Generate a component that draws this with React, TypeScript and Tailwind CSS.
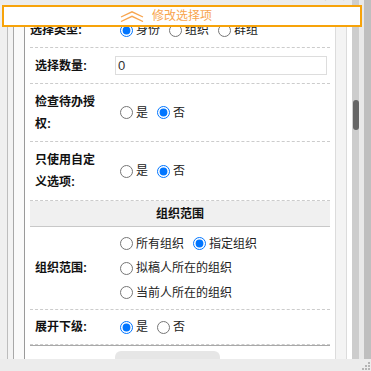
import type { ReactNode } from "react";

const FONT = { fontFamily: '"Liberation Sans", "Noto Sans CJK SC", sans-serif' };

function Radio({ label, checked }: { label: string; checked?: boolean }) {
  return (
    <label className="flex items-center mr-[4px]">
      <input
        type="radio"
        checked={!!checked}
        readOnly
        className="ml-[5px] mr-[3px] w-[13px] h-[13px]"
      />
      <span className="text-[#222]">{label}</span>
    </label>
  );
}

function Row({
  label,
  height,
  children,
  labelClass = "pl-[5px]",
}: {
  label: string;
  height: string;
  children: ReactNode;
  labelClass?: string;
}) {
  return (
    <div className={`flex items-center border-b border-dashed border-[#ccc] ${height}`}>
      <div className={`w-[85px] pr-[15px] font-bold leading-[22px] text-[#111] ${labelClass}`}>{label}</div>
      <div className="flex-1">{children}</div>
    </div>
  );
}

function Chevrons() {
  return (
    <svg width="24" height="11" viewBox="0 0 24 11" fill="none" stroke="#f8a54e" strokeWidth="1.3">
      <path d="M1 6 L12 0.8 L23 6" />
      <path d="M1 10.5 L12 5.3 L23 10.5" />
    </svg>
  );
}

export default function App() {
  return (
    <div className="relative w-[371px] h-[371px] overflow-hidden bg-[#efefef] text-[12px]" style={FONT}>
      <div className="flex h-[359px]">
        <div className="flex flex-col w-[352px]">
          {/* top strip, caption mostly scrolled out of view */}
          <div className="h-[5px] bg-[#ececec] overflow-hidden flex justify-end items-end pr-[1px]">
            <span className="font-bold text-[12px] leading-[12px] mb-[4px] text-[#222]">选择范围设置项</span>
          </div>

          <div className="flex flex-1 min-h-0">
            <div className="w-[7px] bg-[#efefef]" />
            <div className="w-[1px] bg-[#bdbdbd]" />
            <div className="w-[5px] bg-[#f3f3f3]" />
            <div className="w-[1px] bg-[#a8a8a8]" />
            <div className="w-[10px] bg-[#fafafa]" />
            <div className="w-[1px] bg-[#9a9a9a]" />

            <div className="w-[310px] bg-white overflow-hidden px-[5px] pt-[8px]">
              <Row label="选择类型:" height="h-[35px]" labelClass="pl-0 w-[80px]">
                <div className="flex items-center">
                  <Radio label="身份" checked />
                  <Radio label="组织" />
                  <Radio label="群组" />
                </div>
              </Row>
              <Row label="选择数量:" height="h-[36px]">
                <input
                  readOnly
                  value="0"
                  className="w-[212px] h-[19px] border border-[#ddd] px-[2px] text-[13px] text-[#333] outline-none"
                />
              </Row>
              <Row label="检查待办授权:" height="h-[58px]">
                <div className="flex items-center">
                  <Radio label="是" />
                  <Radio label="否" checked />
                </div>
              </Row>
              <Row label="只使用自定义选项:" height="h-[59px]">
                <div className="flex items-center">
                  <Radio label="是" />
                  <Radio label="否" checked />
                </div>
              </Row>

              <div className="h-[26px] bg-[#f0f0f0] border-b border-[#c8c8c8] flex items-center justify-center font-bold text-[#111]">
                组织范围
              </div>

              <Row label="组织范围:" height="h-[83px]">
                <div className="flex flex-col">
                  <div className="flex items-center h-[24.5px]">
                    <Radio label="所有组织" />
                    <Radio label="指定组织" checked />
                  </div>
                  <div className="flex items-center h-[24.5px]">
                    <Radio label="拟稿人所在的组织" />
                  </div>
                  <div className="flex items-center h-[24.5px]">
                    <Radio label="当前人所在的组织" />
                  </div>
                </div>
              </Row>
              <Row label="展开下级:" height="h-[35px]">
                <div className="flex items-center">
                  <Radio label="是" checked />
                  <Radio label="否" />
                </div>
              </Row>
              <div className="h-[1px] bg-[#a9a9a9]" />

              <div className="pt-[5px] pl-[85px]">
                <div className="w-[105px] h-[20px] bg-[#e6e6e6] rounded-t-[6px]" />
              </div>
            </div>

            <div className="w-[1px] bg-[#dcdcdc]" />
            <div className="w-[10px] bg-[#f4f4f4]" />
            <div className="w-[1px] bg-[#dcdcdc]" />
            <div className="w-[5px] bg-white" />
          </div>
        </div>

        {/* scrollbar */}
        <div className="flex w-[19px]">
          <div className="w-[7px] bg-[#cdcdcd] pt-[100px]">
            <div className="ml-[1px] w-[6px] h-[30px] rounded-[3px] bg-[#666]" />
          </div>
          <div className="w-[5px] bg-[#e9e9e9]" />
          <div className="w-[7px] bg-[#bfbfbf]" />
        </div>
      </div>

      {/* bottom bar */}
      <div className="h-[12px] bg-[#ececec] flex justify-end items-end pr-[1px] pb-[1px]">
        <svg width="8" height="8" viewBox="0 0 8 8" fill="#b5b5b5">
          <rect x="6" y="0" width="2" height="2" />
          <rect x="3" y="3" width="2" height="2" />
          <rect x="6" y="3" width="2" height="2" />
          <rect x="0" y="6" width="2" height="2" />
          <rect x="3" y="6" width="2" height="2" />
          <rect x="6" y="6" width="2" height="2" />
        </svg>
      </div>

      {/* floating banner over the list */}
      <div className="absolute left-[2px] top-[5px] w-[360px] h-[22px] border-2 border-[#f7a30a] bg-white flex items-center justify-center">
        <Chevrons />
        <span className="ml-[8px] text-[12px] text-[#f8a54e]">修改选择项</span>
        <span className="w-[32px]" />
      </div>
    </div>
  );
}
